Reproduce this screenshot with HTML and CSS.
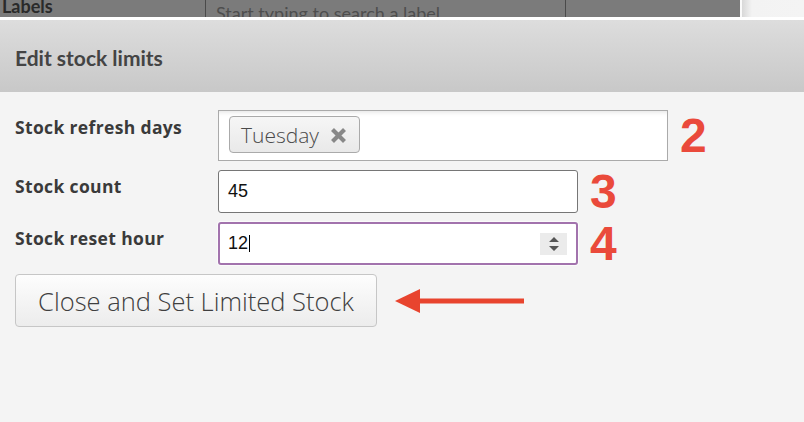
FILE: index.html
```html
<!DOCTYPE html>
<html lang="en">
<head>
<meta charset="utf-8">
<title>Edit stock limits</title>
<link rel="stylesheet" href="styles.css">
</head>
<body>
<div class="page">
  <div class="behind">
    <div class="behind-table">
      <div class="cell cell-label">Labels</div>
      <div class="cell cell-search">Start typing to search a label</div>
      <div class="cell cell-rest"></div>
    </div>
    <div class="behind-gap"></div>
    <div class="behind-edge"></div>
  </div>
  <div class="modal">
    <div class="modal-header">
      <h2 class="modal-title">Edit stock limits</h2>
    </div>
    <div class="modal-body">
      <div class="form">
        <div class="row row-days">
          <label class="label">Stock refresh days</label>
          <div class="control">
            <div class="chosen">
              <span class="tag">Tuesday<svg class="tag-x" width="17" height="17" viewBox="0 0 17 17"><path d="M2.5 2.5 L14.5 14.5 M14.5 2.5 L2.5 14.5" stroke="#888888" stroke-width="4.2" stroke-linecap="butt"/></svg></span>
            </div>
            <span class="num">2</span>
          </div>
        </div>
        <div class="row row-count">
          <label class="label">Stock count</label>
          <div class="control">
            <div class="input">45</div>
            <span class="num">3</span>
          </div>
        </div>
        <div class="row row-hour">
          <label class="label">Stock reset hour</label>
          <div class="control">
            <div class="input input-focus"><span class="value">12</span><span class="caret"></span><span class="spacer"></span><span class="spin"><svg width="12" height="18" viewBox="0 0 12 18"><path d="M1 7 L6 2 L11 7 Z M1 11 L6 16 L11 11 Z" fill="#555"/></svg></span></div>
            <span class="num">4</span>
          </div>
        </div>
      </div>
      <div class="actions">
        <button class="btn" type="button">Close and Set Limited Stock</button>
        <svg class="arrow" width="132" height="28" viewBox="0 0 132 28"><path d="M26 10.5 L130 10.5 L130 15.5 L26 15.5 Z" fill="#e8442e"/><path d="M1 13 L26 1 L26 25 Z" fill="#e8442e"/></svg>
      </div>
    </div>
  </div>
</div>
</body>
</html>
```

FILE: styles.css
```css
* { box-sizing: border-box; }

html, body {
  margin: 0;
  padding: 0;
  background: #f4f4f4;
  overflow: hidden;
}

body {
  font-family: "Lato", "Open Sans", sans-serif;
  color: #3d3d3d;
  width: 804px;
  height: 422px;
}

/* page behind the modal */
.behind {
  display: flex;
  height: 17px;
  overflow: hidden;
}

.behind-table {
  display: flex;
  width: 740px;
  background: #7b7b7b;
}

.cell {
  height: 17px;
  overflow: hidden;
  white-space: nowrap;
}

.cell-label {
  width: 206px;
  border-right: 1px solid #4a4a4a;
  padding-left: 2px;
  font-weight: 700;
  font-size: 18px;
  line-height: 17px;
  color: #2a2a2a;
  margin-top: -2px;
  height: 19px;
}

.cell-search {
  width: 360px;
  border-right: 1px solid #4a4a4a;
  padding-left: 10px;
  padding-top: 3px;
  font-size: 18px;
  line-height: 20px;
  color: #4e4e4e;
}

.cell-rest { flex: 1; }

.behind-gap {
  width: 2px;
  background: #fafafa;
}

.behind-edge {
  flex: 1;
  background: linear-gradient(to right, #d8d8d8 0, #f3f3f3 10px, #f4f4f4 100%);
}

/* modal */
.modal {
  border-top: 3px solid #ffffff;
}

.modal-header {
  height: 72px;
  display: flex;
  align-items: center;
  padding-left: 15px;
  background: linear-gradient(to bottom, #dddddd, #c8c8c8);
}

.modal-title {
  margin: 0;
  font-size: 21px;
  font-weight: 700;
  color: #444;
  padding-top: 2px;
}

.modal-body {
  padding: 18px 15px;
}

.form {
  display: flex;
  flex-direction: column;
  gap: 9px;
}

.row {
  display: flex;
  align-items: flex-start;
}

.label {
  width: 203px;
  font-family: "Open Sans", "Lato", sans-serif;
  font-weight: 700;
  font-size: 17.5px;
  letter-spacing: 0.35px;
  color: #3a3a3a;
  line-height: 22px;
  padding-top: 6px;
}

.row-count .label { padding-top: 5px; }
.row-hour .label { padding-top: 5px; }

.control {
  display: flex;
  align-items: center;
}

.chosen {
  width: 450px;
  height: 51px;
  border: 1px solid #aaaaaa;
  background: #fff;
  box-shadow: inset 0 5px 5px -4px rgba(0,0,0,0.12);
  padding: 5px 10px;
}

.tag {
  display: inline-flex;
  align-items: center;
  height: 37px;
  width: 131px;
  padding-left: 11px;
  border: 1px solid #aaaaaa;
  border-radius: 4px;
  background: linear-gradient(to bottom, #f6f6f6, #e9e9e9);
  font-family: "Open Sans", "Lato", sans-serif;
  font-size: 21px;
  font-weight: 300;
  color: #4a4a4a;
  gap: 11px;
}

.tag-x { margin-top: 1px; }

.input {
  display: flex;
  align-items: center;
  width: 360px;
  height: 43px;
  border: 1px solid #767676;
  border-radius: 3px;
  background: #fff;
  padding-left: 9px;
  font-family: "Liberation Sans", Arial, sans-serif;
  font-size: 18px;
  color: #111;
}

.input-focus {
  border: 2px solid #a273ad;
  padding-left: 8px;
  padding-right: 9px;
  box-shadow: 0 0 0 1px #fbfbfb;
}

.caret {
  width: 1px;
  height: 17px;
  background: #000;
  margin-left: 1px;
}

.spacer { flex: 1; }

.spin {
  display: flex;
  align-items: center;
  justify-content: center;
  width: 27px;
  height: 22px;
  background: #ebebeb;
}

.num {
  font-family: "Liberation Sans", Arial, sans-serif;
  font-weight: 700;
  font-size: 48px;
  line-height: 40px;
  color: #ea4a3b;
  margin-left: 12px;
}

.actions {
  display: flex;
  align-items: center;
  margin-top: 9px;
}

.btn {
  width: 362px;
  height: 53px;
  border: 1px solid #c6c6c6;
  border-radius: 4px;
  background: linear-gradient(to bottom, #fdfdfd, #ececec);
  font-family: "Open Sans", "Lato", sans-serif;
  font-size: 25.5px;
  font-weight: 300;
  color: #3f3f3f;
  padding: 0;
}

.arrow {
  margin-left: 17px;
  margin-top: 3px;
}
```
